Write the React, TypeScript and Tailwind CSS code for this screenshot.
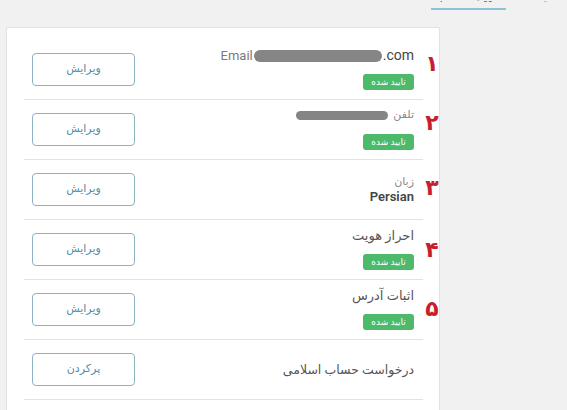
import React from "react";

const font = { fontFamily: "Roboto, 'DejaVu Sans', sans-serif" };

function Badge() {
  return (
    <span className="inline-flex h-[16px] w-[51px] items-center justify-center rounded-[3px] bg-[#4cb96b] text-[9px] font-medium leading-none text-white">
      تایید شده
    </span>
  );
}

function Btn({ label }: { label: string }) {
  return (
    <button className="flex h-[33px] w-[103px] items-center justify-center rounded-[4px] border border-[#8db2c1] bg-white text-[11px] text-[#4f8ea6]">
      {label}
    </button>
  );
}

function Row({
  num,
  numTop,
  children,
  btn = "ویرایش",
}: {
  num?: string;
  numTop?: number;
  children: React.ReactNode;
  btn?: string;
}) {
  return (
    <div className="relative flex h-[60px] items-center justify-between border-b border-[#e3e3e3] pl-[8px] pr-[9px]">
      <Btn label={btn} />
      <div className="flex flex-col items-end">{children}</div>
      {num && (
        <span
          className="absolute right-[-17px] w-[16px] text-center text-[22px] font-bold leading-none text-[#c81e2c]"
          style={{ top: numTop }}
        >
          {num}
        </span>
      )}
    </div>
  );
}

export default function App() {
  return (
    <div className="h-[410px] w-[567px] overflow-hidden bg-[#f1f1f1]" style={font}>
      <div className="relative h-[27px]">
        <div className="absolute left-[431px] top-[-11px] flex w-[75px] flex-col items-center">
          <span className="whitespace-nowrap text-[12px] font-semibold leading-[15px] text-[#333]">تایید حساب</span>
          <div className="mt-[4px] h-[2px] w-full bg-[#8cc3d8]" />
        </div>
        <span className="absolute left-[533px] top-[-11px] whitespace-nowrap text-[11px] leading-[15px] text-[#aaa]">امنیت</span>
      </div>
      <div className="ml-[6px] w-[434px] rounded-[2px] border border-[#e2e2e2] bg-white pl-[17px] pr-[16px] pt-[12px]">
        <Row num="۱" numTop={13}>
          <div className="flex h-[16px] items-center text-[13px]">
            <span className="text-[#7a7a7a]">Email</span>
            <span className="mx-[1px] h-[12px] w-[128px] rounded-full bg-[#858585]" />
            <span className="text-[14px] text-[#444]">.com</span>
          </div>
          <div className="mt-[4px]">
            <Badge />
          </div>
        </Row>
        <Row num="۲" numTop={12}>
          <div className="flex h-[16px] items-center">
            <span className="mr-[5px] h-[9px] w-[92px] rounded-full bg-[#858585]" />
            <span className="text-[11px] text-[#888]">تلفن</span>
          </div>
          <div className="mt-[4px]">
            <Badge />
          </div>
        </Row>
        <Row num="۳" numTop={17}>
          <span className="text-[11px] leading-[15px] text-[#888]">زبان</span>
          <span className="text-[13px] font-semibold leading-[16px] text-[#444]">Persian</span>
        </Row>
        <Row num="۴" numTop={19}>
          <span className="text-[13px] leading-[16px] text-[#555]">احراز هویت</span>
          <div className="mt-[4px]">
            <Badge />
          </div>
        </Row>
        <Row num="۵" numTop={18}>
          <span className="text-[13px] leading-[16px] text-[#555]">اثبات آدرس</span>
          <div className="mt-[4px]">
            <Badge />
          </div>
        </Row>
        <Row btn="پرکردن">
          <span className="text-[12.5px] leading-[16px] text-[#555]">درخواست حساب اسلامی</span>
        </Row>
        <Row btn="ویرایش">
          <span className="text-[13px] leading-[16px] text-[#555]"> </span>
        </Row>
      </div>
    </div>
  );
}
